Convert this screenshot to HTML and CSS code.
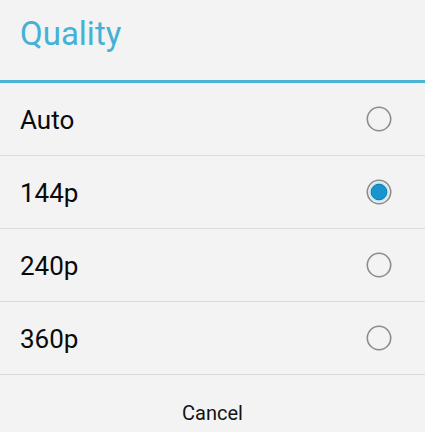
FILE: index.html
```html
<!DOCTYPE html>
<html lang="en">
<head>
    <meta charset="UTF-8">
    <meta name="viewport" content="width=device-width, initial-scale=1.0">
    <title>Quality</title>
    <link rel="stylesheet" href="styles.css">
</head>
<body>
    <div class="dialog">
        <div class="title">Quality</div>
        <ul class="options">
            <li class="option">
                <span>Auto</span>
                <svg class="radio" width="26" height="26" viewBox="0 0 26 26"><circle cx="13" cy="13" r="11.7" fill="none" stroke="#8c8c8c" stroke-width="1.6"/></svg>
            </li>
            <li class="option">
                <span>144p</span>
                <svg class="radio" width="26" height="26" viewBox="0 0 26 26">
                    <circle cx="13" cy="13" r="11.7" fill="none" stroke="#8c8c8c" stroke-width="1.6"/>
                    <circle cx="13" cy="13" r="10" fill="#c4e6f4"/>
                    <circle cx="13" cy="13" r="7.8" fill="#1894cf" stroke="#137bb0" stroke-width="1"/>
                </svg>
            </li>
            <li class="option">
                <span>240p</span>
                <svg class="radio" width="26" height="26" viewBox="0 0 26 26"><circle cx="13" cy="13" r="11.7" fill="none" stroke="#8c8c8c" stroke-width="1.6"/></svg>
            </li>
            <li class="option">
                <span>360p</span>
                <svg class="radio" width="26" height="26" viewBox="0 0 26 26"><circle cx="13" cy="13" r="11.7" fill="none" stroke="#8c8c8c" stroke-width="1.6"/></svg>
            </li>
        </ul>
        <div class="actions">
            <button type="button">Cancel</button>
        </div>
    </div>
</body>
</html>
```

FILE: styles.css
```css
html, body {
    margin: 0;
    padding: 0;
    height: 100%;
    overflow: hidden;
}
body {
    font-family: Roboto, "Liberation Sans", sans-serif;
    background-color: #f3f3f3;
    color: #0a0a0a;
}
.dialog {
    width: 425px;
}
.title {
    box-sizing: border-box;
    height: 83px;
    padding: 14px 20px 0;
    font-size: 33px;
    color: #44b1d6;
    border-bottom: 3px solid #4ab3d4;
}
.options {
    list-style: none;
    margin: 0;
    padding: 0;
}
.option {
    display: flex;
    align-items: center;
    justify-content: space-between;
    height: 72px;
    padding: 0 33px 0 20px;
    font-size: 26px;
    border-bottom: 1px solid #dcdcdc;
}
.option span {
    padding-top: 2px;
}
.radio {
    display: block;
}
.actions {
    height: 72px;
    display: flex;
}
.actions button {
    flex: 1;
    border: none;
    background: none;
    font-family: inherit;
    font-size: 20px;
    color: #141414;
    padding: 4px 0 0;
}
```
